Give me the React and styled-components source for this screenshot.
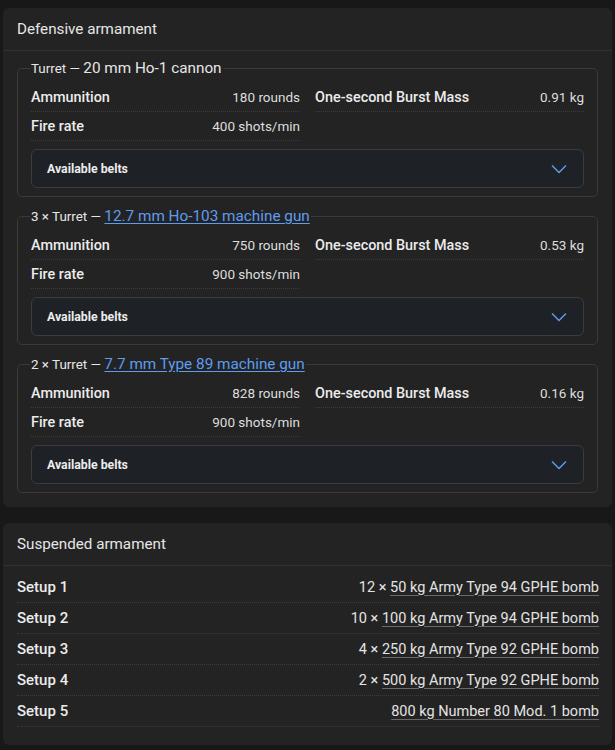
import React from "react";
import styled, { createGlobalStyle } from "styled-components";

const Global = createGlobalStyle`
  html, body { margin: 0; padding: 0; background: #181818; }
  body {
    font-family: Roboto, "Liberation Sans", sans-serif;
    color: #e4e4e4;
  }
`;

const Page = styled.div`
  padding: 8px 3px 5px 3px;
  display: flex;
  flex-direction: column;
  gap: 16px;
`;

const Card = styled.section`
  background: #232323;
  border-radius: 6px;
  display: flex;
  flex-direction: column;
`;

const CardHeader = styled.h2`
  margin: 0;
  padding: 0 14px;
  height: 43px;
  box-sizing: border-box;
  display: flex;
  align-items: center;
  font-size: 15.2px;
  font-weight: 400;
  color: #e6e6e6;
  border-bottom: 1px solid #303030;
`;

const CardBody = styled.div`
  padding: ${(p) => p.$pad || "6px 14px 14px"};
  display: flex;
  flex-direction: column;
  gap: ${(p) => p.$gap || "8px"};
`;

const Weapon = styled.fieldset`
  margin: 0;
  padding: 0 13px 8px;
  border: 1px solid #3a3a3a;
  border-radius: 5px;
  min-width: 0;
`;

const Legend = styled.legend`
  padding: 0 1px;
  margin-left: -1px;
  font-size: 15.3px;
  line-height: 22px;
  color: #e6e6e6;
`;

const Mount = styled.span`
  font-size: 13.4px;
`;

const WeaponLink = styled.a`
  color: #5e9cf0;
  text-decoration: underline;
  text-underline-offset: 2px;
`;

const StatGrid = styled.div`
  padding-top: 3px;
  display: grid;
  grid-template-columns: 1fr 1fr;
  column-gap: 15px;
`;

const Stat = styled.div`
  display: flex;
  justify-content: space-between;
  align-items: center;
  height: 28px;
  border-bottom: 1px dotted #3c3c3c;
`;

const StatLabel = styled.span`
  font-size: 14.4px;
  font-weight: 500;
  color: #ececec;
`;

const StatValue = styled.span`
  font-size: 13.5px;
  color: #dedede;
`;

const Belts = styled.div`
  margin-top: 8px;
  height: 39px;
  box-sizing: border-box;
  border: 1px solid #393c41;
  border-radius: 6px;
  background: #1e2126;
  display: flex;
  align-items: center;
  justify-content: space-between;
  padding: 0 16px 0 15px;
`;

const BeltsTitle = styled.span`
  font-size: 12.3px;
  font-weight: 700;
  color: #ececec;
`;

const Chevron = () => (
  <svg width="16" height="10" viewBox="0 0 16 10" fill="none">
    <path d="M1 1.5 L8 8.5 L15 1.5" stroke="#5e9cf0" strokeWidth="1.5" />
  </svg>
);

const SetupRow = styled.div`
  display: flex;
  justify-content: space-between;
  align-items: center;
  height: 30px;
  border-bottom: 1px dotted #3c3c3c;
`;

const SetupLabel = styled.span`
  font-size: 15px;
  font-weight: 500;
  color: #ececec;
`;

const SetupValue = styled.span`
  font-size: 14.5px;
  color: #e4e4e4;
`;

const Ordnance = styled.span`
  text-decoration: underline;
  text-decoration-color: #6a6a6a;
  text-underline-offset: 3px;
`;

const weapons = [
  { mount: "Turret", name: "20 mm Ho-1 cannon", link: false, ammo: "180 rounds", burst: "0.91 kg", rate: "400 shots/min" },
  { mount: "3 × Turret", name: "12.7 mm Ho-103 machine gun", link: true, ammo: "750 rounds", burst: "0.53 kg", rate: "900 shots/min" },
  { mount: "2 × Turret", name: "7.7 mm Type 89 machine gun", link: true, ammo: "828 rounds", burst: "0.16 kg", rate: "900 shots/min" },
];

const setups = [
  ["12 × ", "50 kg Army Type 94 GPHE bomb"],
  ["10 × ", "100 kg Army Type 94 GPHE bomb"],
  ["4 × ", "250 kg Army Type 92 GPHE bomb"],
  ["2 × ", "500 kg Army Type 92 GPHE bomb"],
  ["", "800 kg Number 80 Mod. 1 bomb"],
];

export default function App() {
  return (
    <>
      <Global />
      <Page>
        <Card>
          <CardHeader>Defensive armament</CardHeader>
          <CardBody>
            {weapons.map((w) => (
              <Weapon key={w.name}>
                <Legend>
                  <Mount>{w.mount} — </Mount>
                  {w.link ? <WeaponLink href="#">{w.name}</WeaponLink> : w.name}
                </Legend>
                <StatGrid>
                  <Stat>
                    <StatLabel>Ammunition</StatLabel>
                    <StatValue>{w.ammo}</StatValue>
                  </Stat>
                  <Stat>
                    <StatLabel>One-second Burst Mass</StatLabel>
                    <StatValue>{w.burst}</StatValue>
                  </Stat>
                  <Stat>
                    <StatLabel>Fire rate</StatLabel>
                    <StatValue>{w.rate}</StatValue>
                  </Stat>
                </StatGrid>
                <Belts>
                  <BeltsTitle>Available belts</BeltsTitle>
                  <Chevron />
                </Belts>
              </Weapon>
            ))}
          </CardBody>
        </Card>
        <Card>
          <CardHeader>Suspended armament</CardHeader>
          <CardBody $pad="6px 13px 18px 14px" $gap="0">
            {setups.map(([count, name], i) => (
              <SetupRow key={i}>
                <SetupLabel>Setup {i + 1}</SetupLabel>
                <SetupValue>
                  {count}
                  <Ordnance>{name}</Ordnance>
                </SetupValue>
              </SetupRow>
            ))}
          </CardBody>
        </Card>
      </Page>
    </>
  );
}
